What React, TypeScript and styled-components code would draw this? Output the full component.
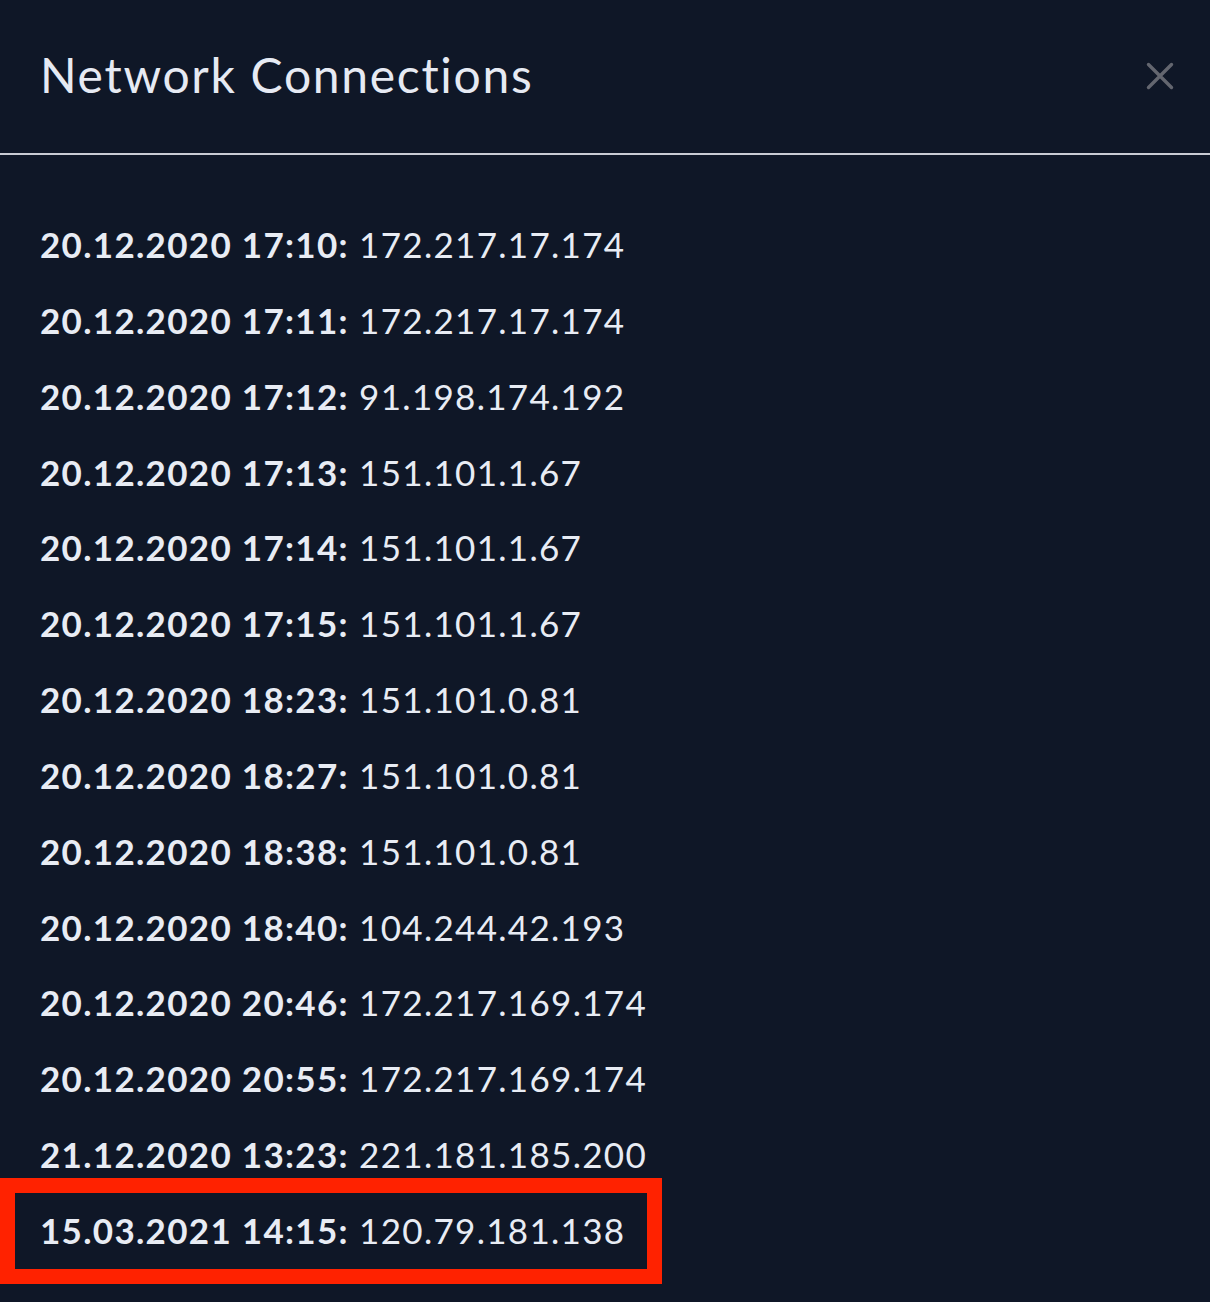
import React from "react";
import styled, { createGlobalStyle } from "styled-components";

const Global = createGlobalStyle`
  html, body { margin: 0; padding: 0; background: #0f1727; }
  body { font-family: "Lato", "Noto Sans", sans-serif; }
`;

const Panel = styled.div`
  width: 1210px;
  height: 1302px;
  background: #0f1727;
  color: #e8ecf4;
  overflow: hidden;
`;

const Header = styled.header`
  height: 155px;
  border-bottom: 2px solid #c9ccd4;
  display: flex;
  align-items: center;
  justify-content: space-between;
  padding: 0 30px 0 40px;
  box-sizing: border-box;
`;

const Title = styled.h1`
  margin: 0;
  font-family: "Lato", sans-serif;
  font-weight: 400;
  font-size: 48px;
  letter-spacing: 1.7px;
  color: #e6eaf3;
  transform: translateY(-2px);
`;

const Close = styled.button`
  background: none;
  border: none;
  padding: 0;
  width: 40px;
  height: 40px;
  display: flex;
  align-items: center;
  justify-content: center;
  cursor: pointer;
  transform: translateY(-1px);
`;

const List = styled.div`
  display: flex;
  flex-direction: column;
  align-items: flex-start;
  padding-top: 52px;
`;

const Row = styled.div<{ $highlight?: boolean }>`
  height: 75.85px;
  line-height: 75.85px;
  font-family: "Lato", sans-serif;
  font-size: 35px;
  letter-spacing: 1.3px;
  color: #e8ecf4;
  white-space: pre;
  box-sizing: border-box;
  margin-left: 15px;
  padding: 0 22px 0 25px;
  outline: ${(p) => (p.$highlight ? "15px solid #ff2200" : "none")};
`;

const Stamp = styled.b`
  font-weight: 700;
`;

const rows: [string, string][] = [
  ["20.12.2020 17:10:", "172.217.17.174"],
  ["20.12.2020 17:11:", "172.217.17.174"],
  ["20.12.2020 17:12:", "91.198.174.192"],
  ["20.12.2020 17:13:", "151.101.1.67"],
  ["20.12.2020 17:14:", "151.101.1.67"],
  ["20.12.2020 17:15:", "151.101.1.67"],
  ["20.12.2020 18:23:", "151.101.0.81"],
  ["20.12.2020 18:27:", "151.101.0.81"],
  ["20.12.2020 18:38:", "151.101.0.81"],
  ["20.12.2020 18:40:", "104.244.42.193"],
  ["20.12.2020 20:46:", "172.217.169.174"],
  ["20.12.2020 20:55:", "172.217.169.174"],
  ["21.12.2020 13:23:", "221.181.185.200"],
  ["15.03.2021 14:15:", "120.79.181.138"],
];

export default function App() {
  return (
    <>
      <Global />
      <Panel>
        <Header>
          <Title>Network Connections</Title>
          <Close aria-label="Close">
            <svg width="28" height="28" viewBox="0 0 28 28">
              <path d="M2.5 2.5 L25.5 25.5 M25.5 2.5 L2.5 25.5" stroke="#63666f" strokeWidth="3.4" strokeLinecap="round" />
            </svg>
          </Close>
        </Header>
        <List>
          {rows.map(([t, ip], i) => (
            <Row key={i} $highlight={i === rows.length - 1}>
              <Stamp>{t}</Stamp>
              {" " + ip}
            </Row>
          ))}
        </List>
      </Panel>
    </>
  );
}
